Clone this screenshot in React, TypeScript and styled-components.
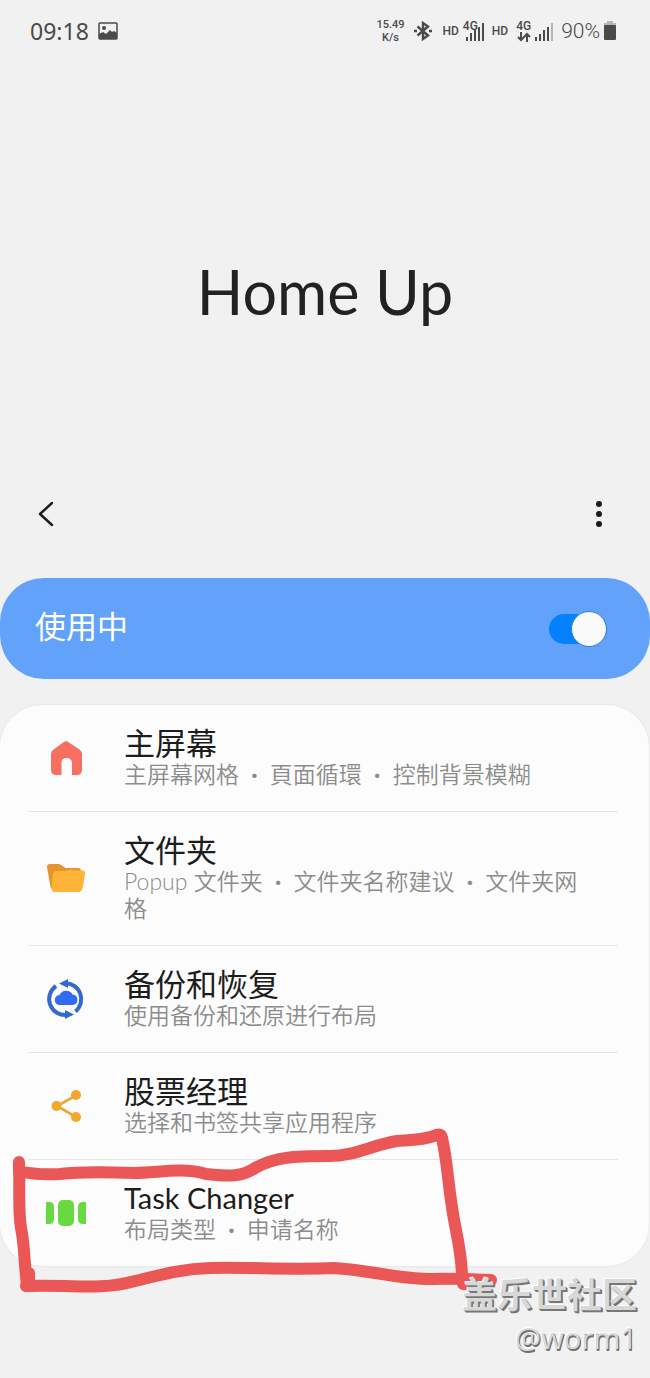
import React from 'react';
import styled, { createGlobalStyle } from 'styled-components';

const GlobalStyle = createGlobalStyle`
  * { box-sizing: border-box; }
  body {
    margin: 0;
    background: #f1f1f1;
    color: #222;
    font-family: Lato, "Noto Sans CJK SC", sans-serif;
  }
`;

const Page = styled.main`
  display: flex;
  flex-direction: column;
  min-height: 100vh;
  overflow: hidden;
`;

const StatusBar = styled.header`
  display: flex;
  align-items: center;
  justify-content: space-between;
  height: 62px;
  padding: 0 33px 0 30px;
  color: #4a4a4a;
  font-family: "Noto Sans", sans-serif;
`;

const StatusGroup = styled.div<{ $gap: number }>`
  display: flex;
  align-items: center;
  gap: ${(p) => p.$gap}px;
`;

const Clock = styled.time`
  font-size: 23px;
  line-height: 32px;
`;

const Speed = styled.span`
  display: flex;
  flex-direction: column;
  align-items: center;
  font-family: Roboto, sans-serif;
  font-size: 11px;
  font-weight: 500;
  line-height: 13px;
`;

const Hd = styled.span`
  font-family: Roboto, sans-serif;
  font-size: 12px;
  font-weight: 500;
  line-height: 16px;
`;

const Network = styled.span<{ $overlap?: boolean }>`
  display: flex;
  align-items: flex-end;
  gap: 4px;
  height: 22px;

  svg:last-child { margin-left: ${(p) => (p.$overlap ? '-16px' : '0')}; }
`;

const NetworkType = styled.span`
  display: flex;
  flex-direction: column;
  align-items: center;
  align-self: flex-start;
  font-family: Roboto, sans-serif;
  font-size: 12px;
  font-weight: 500;
  line-height: 12px;
`;

const BatteryLevel = styled.span`
  display: flex;
  align-items: center;
  gap: 3px;
  font-family: Roboto, sans-serif;
  font-size: 21px;
  font-weight: 300;
  line-height: 32px;
`;

const Hero = styled.section`
  display: flex;
  justify-content: center;
  padding: 190px 24px 150px;
`;

const Title = styled.h1`
  margin: 0;
  color: #222;
  font-size: 61px;
  font-weight: 400;
  line-height: 80px;
`;

const Toolbar = styled.nav`
  display: flex;
  align-items: center;
  justify-content: space-between;
  height: 64px;
  padding: 0 31px 0 26px;
`;

const IconButton = styled.button`
  display: grid;
  place-items: center;
  width: 40px;
  height: 40px;
  padding: 0;
  border: 0;
  background: none;
  color: #1c1c1c;
`;

const MasterSwitch = styled.label`
  display: flex;
  align-items: center;
  justify-content: space-between;
  margin-top: 32px;
  padding: 28px 43px 33px 35px;
  border-radius: 44px;
  background: #62a2fa;
  color: #fff;
  font-size: 31px;
  line-height: 40px;
`;

const Toggle = styled.input`
  display: flex;
  align-items: center;
  justify-content: flex-end;
  appearance: none;
  width: 58px;
  height: 30px;
  margin: 5px 0 0;
  border-radius: 15px;
  background: #0381fe;

  &::before {
    content: "";
    width: 34px;
    height: 34px;
    flex: none;
    border: 1px solid #2a7fd6;
    border-radius: 50%;
    background: #fafafa;
  }
`;

const Card = styled.ul`
  margin: 26px 1px 0 0;
  padding: 0 31px 0 28px;
  list-style: none;
  border-radius: 42px;
  background: #fcfcfc;
  box-shadow: 0 0 1px 1px #e9e9e9;
`;

const Row = styled.li`
  position: relative;
  border-bottom: 1px solid #e6e6e6;

  &:last-child { border-bottom: 0; }
`;

const RowLink = styled.a`
  display: flex;
  align-items: center;
  gap: 38px;
  padding: 20px 28px 23px 18px;
  color: inherit;
  text-decoration: none;

  > svg {
    flex: none;
    margin-top: 3px;
  }
`;

const RowTitle = styled.h2`
  margin: 0;
  color: #1d1d1d;
  font-size: 31px;
  font-weight: 400;
  line-height: 36px;
`;

const RowLatinTitle = styled(RowTitle)`
  font-size: 29px;
`;

const RowNote = styled.p`
  margin: 0;
  color: #8c8c8c;
  font-size: 23px;
  font-weight: 350;
  line-height: 27px;
`;

const Dot = styled.span`
  margin: 0 6px;
  font-weight: 700;
`;

const Marker = styled.svg`
  position: absolute;
  top: -40px;
  left: -28px;
  pointer-events: none;
`;

const Signature = styled.footer`
  position: relative;
  display: flex;
  flex-direction: column;
  align-items: flex-end;
  padding: 8px 13px 16px;
  color: #d8d8d8;
  text-shadow: 1px 1px 0 #777, 2px 2px 0 #777, -1px -1px 0 #fff;
`;

const Community = styled.strong`
  font-size: 35px;
  font-weight: 700;
  line-height: 40px;
`;

const Author = styled.span`
  font-family: "Noto Sans", sans-serif;
  font-size: 29px;
  line-height: 48px;
  text-shadow: 1px 1px 0 #6e6e6e, 1px 2px 0 #777, -1px -1px 0 #fff;
`;

const PictureIcon = () => (
  <svg width="20" height="18" viewBox="0 0 20 18" aria-hidden="true">
    <rect x="1" y="1" width="18" height="16" rx="1" fill="none" stroke="#4a4a4a" strokeWidth="1.5" />
    <circle cx="6" cy="6" r="2" fill="#4a4a4a" />
    <path d="M1 12l4-2 3 2 4-4 2 2 2-1 3 2v6H1z" fill="#4a4a4a" />
  </svg>
);

const BluetoothIcon = () => (
  <svg width="18" height="20" viewBox="0 0 18 20" fill="none" stroke="#4a4a4a" strokeWidth="2.400" aria-hidden="true">
    <path d="M3.500 5.500L14 14.500 9 18V2L14 5.500 3.500 14.500" />
    <path d="M0 10h3M15 10h3" />
  </svg>
);

const Signal = ({ bars, faded }: { bars: number[]; faded?: boolean }) => (
  <svg width="18" height="20" viewBox="0 0 18 20" aria-hidden="true">
    {bars.map((h, i) => (
      <rect
        key={i}
        x={i * 4}
        y={19 - h}
        width="2"
        height={h}
        fill={faded && i === bars.length - 1 ? '#b5b5b5' : '#4a4a4a'}
      />
    ))}
  </svg>
);

const DataArrows = () => (
  <svg width="14" height="10" viewBox="0 0 14 10" fill="none" stroke="#4a4a4a" strokeWidth="2" aria-hidden="true">
    <path d="M4 0v8M1 5l3 3 3-3M10 10V2M7 5l3-3 3 3" />
  </svg>
);

const BatteryIcon = () => (
  <svg width="14" height="20" viewBox="0 0 14 20" aria-hidden="true">
    <path d="M4 0h6v2h3v3H1V2h3z" fill="#b5b5b5" />
    <rect x="1" y="4" width="12" height="15" rx="1" fill="#4a4a4a" />
  </svg>
);

const BackIcon = () => (
  <svg width="18" height="26" viewBox="0 0 18 26" fill="none" stroke="currentColor" strokeWidth="2.400" strokeLinecap="round" strokeLinejoin="round" aria-hidden="true">
    <path d="M15 2L3 13l12 11" />
  </svg>
);

const MoreIcon = () => (
  <svg width="8" height="28" viewBox="0 0 8 28" fill="currentColor" aria-hidden="true">
    <circle cx="4" cy="4" r="3" />
    <circle cx="4" cy="14" r="3" />
    <circle cx="4" cy="24" r="3" />
  </svg>
);

const HomeIcon = () => (
  <svg width="40" height="40" viewBox="0 0 40 40" aria-hidden="true">
    <path
      fill="#f66f61"
      d="M17.500 4.200Q20 2.400 22.500 4.200L33.500 11.500Q36 13 36 16V31.500Q36 37 30.500 37H26V25.500Q26 20 20.500 20T15.500 25.500V37H10.500Q5 37 5 31.500V16Q5 13 7.500 11.500Z"
    />
  </svg>
);

const FolderIcon = () => (
  <svg width="40" height="40" viewBox="0 0 40 40" aria-hidden="true">
    <path fill="#e6942f" d="M1 8Q1 5 4 5H12.500Q14.500 5 16 6.500L19.500 9H32Q35 9 35 12V30H6Q5 30 4.500 28Z" />
    <path fill="#feb437" d="M7 15Q8 12 11 12H18Q20.500 12 22 11.500L24 10.800Q25 10.500 26 11L28 11.500H36Q39.500 11.500 39 15L36.500 29.500Q35.500 33 32 33H9Q5.500 33 5.500 29Z" />
  </svg>
);

const BackupIcon = () => (
  <svg width="40" height="40" viewBox="0 0 40 40" aria-hidden="true">
    <g fill="none" stroke="#3569cd" strokeWidth="4">
      <path d="M10 7A16 16 0 0 0 21 36" />
      <path d="M19 4.200A16 16 0 0 1 29.500 32.500" />
    </g>
    <path fill="#3569cd" d="M13 4.500L22 0V9ZM28 35.500L19 31V40Z" />
    <path fill="#2f6cf0" d="M14 26a5 5 0 0 1-.600-10 7.500 7.500 0 0 1 13.200-.500A5.300 5.300 0 0 1 27 26Z" />
  </svg>
);

const ShareIcon = () => (
  <svg width="40" height="40" viewBox="0 0 40 40" aria-hidden="true">
    <path d="M30 9.500L11 20l19 11" fill="none" stroke="#eba638" strokeWidth="2.600" />
    <g fill="#f2a72d">
      <circle cx="30" cy="9" r="5" />
      <circle cx="10.500" cy="20" r="5" />
      <circle cx="30" cy="31" r="5" />
    </g>
  </svg>
);

const TaskIcon = () => (
  <svg width="40" height="40" viewBox="0 0 40 40" fill="#68d940" aria-hidden="true">
    <rect x="12" y="7" width="16" height="26" rx="5" />
    <path d="M0 9H3Q8 9 8 14V26Q8 31 3 31H0ZM40 9H37Q32 9 32 14V26Q32 31 37 31H40Z" />
  </svg>
);

interface Item {
  icon: React.ReactNode;
  title: string;
  notes: string[];
  latin?: boolean;
  marked?: boolean;
}

const items: Item[] = [
  { icon: <HomeIcon />, title: '主屏幕', notes: ['主屏幕网格', '頁面循環', '控制背景模糊'] },
  { icon: <FolderIcon />, title: '文件夹', notes: ['Popup 文件夹', '文件夹名称建议', '文件夹网格'] },
  { icon: <BackupIcon />, title: '备份和恢复', notes: ['使用备份和还原进行布局'] },
  { icon: <ShareIcon />, title: '股票经理', notes: ['选择和书签共享应用程序'] },
  { icon: <TaskIcon />, title: 'Task Changer', notes: ['布局类型', '申请名称'], latin: true, marked: true },
];

export default function App() {
  return (
    <Page>
      <GlobalStyle />
      <StatusBar>
        <StatusGroup $gap={9}>
          <Clock>09:18</Clock>
          <PictureIcon />
        </StatusGroup>
        <StatusGroup $gap={8}>
          <StatusGroup $gap={10}>
            <Speed>
              <span>15.49</span>
              <span>K/s</span>
            </Speed>
            <BluetoothIcon />
            <StatusGroup $gap={4}>
              <Hd>HD</Hd>
              <Network $overlap>
                <NetworkType>4G</NetworkType>
                <Signal bars={[4, 8, 11, 14, 18]} />
              </Network>
            </StatusGroup>
          </StatusGroup>
          <Hd>HD</Hd>
          <Network>
            <NetworkType>
              4G
              <DataArrows />
            </NetworkType>
            <Signal bars={[4, 7, 11, 14, 18]} faded />
          </Network>
          <BatteryLevel>
            90%
            <BatteryIcon />
          </BatteryLevel>
        </StatusGroup>
      </StatusBar>

      <Hero>
        <Title>Home Up</Title>
      </Hero>

      <Toolbar>
        <IconButton type="button" aria-label="返回">
          <BackIcon />
        </IconButton>
        <IconButton type="button" aria-label="更多选项">
          <MoreIcon />
        </IconButton>
      </Toolbar>

      <MasterSwitch>
        使用中
        <Toggle type="checkbox" role="switch" defaultChecked />
      </MasterSwitch>

      <Card>
        {items.map((item) => {
          const Heading = item.latin ? RowLatinTitle : RowTitle;
          return (
            <Row key={item.title}>
              <RowLink href="#">
                {item.icon}
                <div>
                  <Heading>{item.title}</Heading>
                  <RowNote>
                    {item.notes.map((note, i) => (
                      <React.Fragment key={note}>
                        {i > 0 && <> <Dot>·</Dot> </>}
                        {note}
                      </React.Fragment>
                    ))}
                  </RowNote>
                </div>
              </RowLink>
              {item.marked && (
                <Marker
                  width="510"
                  height="180"
                  viewBox="0 1120 510 180"
                  fill="none"
                  stroke="#eb5757"
                  strokeWidth="12"
                  strokeLinecap="round"
                  strokeLinejoin="round"
                  aria-hidden="true"
                >
                  <path d="M19 1162V1170C20 1190 18 1209 21 1228C25 1247 24 1264 27 1285" />
                  <path d="M19 1171C31 1174 43 1175 60 1174C82 1171 109 1172 135 1173C158 1173 181 1167 206 1174C222 1175 239 1179 255 1168C275 1157 293 1156 329 1156C355 1156 372 1145 397 1141C410 1140 423 1140 434 1136Q441 1132 442 1138C447 1159 448 1183 452 1207C455 1231 462 1250 462 1278" />
                  <path d="M26 1286C65 1284 100 1291 135 1281C157 1276 178 1269 210 1268C247 1267 291 1270 334 1268C369 1270 398 1279 431 1279C450 1278 470 1279 491 1280" />
                  <path d="M29 1273V1285M463 1284H466" />
                </Marker>
              )}
            </Row>
          );
        })}
      </Card>

      <Signature>
        <Community>盖乐世社区</Community>
        <Author>@worm1</Author>
      </Signature>
    </Page>
  );
}
